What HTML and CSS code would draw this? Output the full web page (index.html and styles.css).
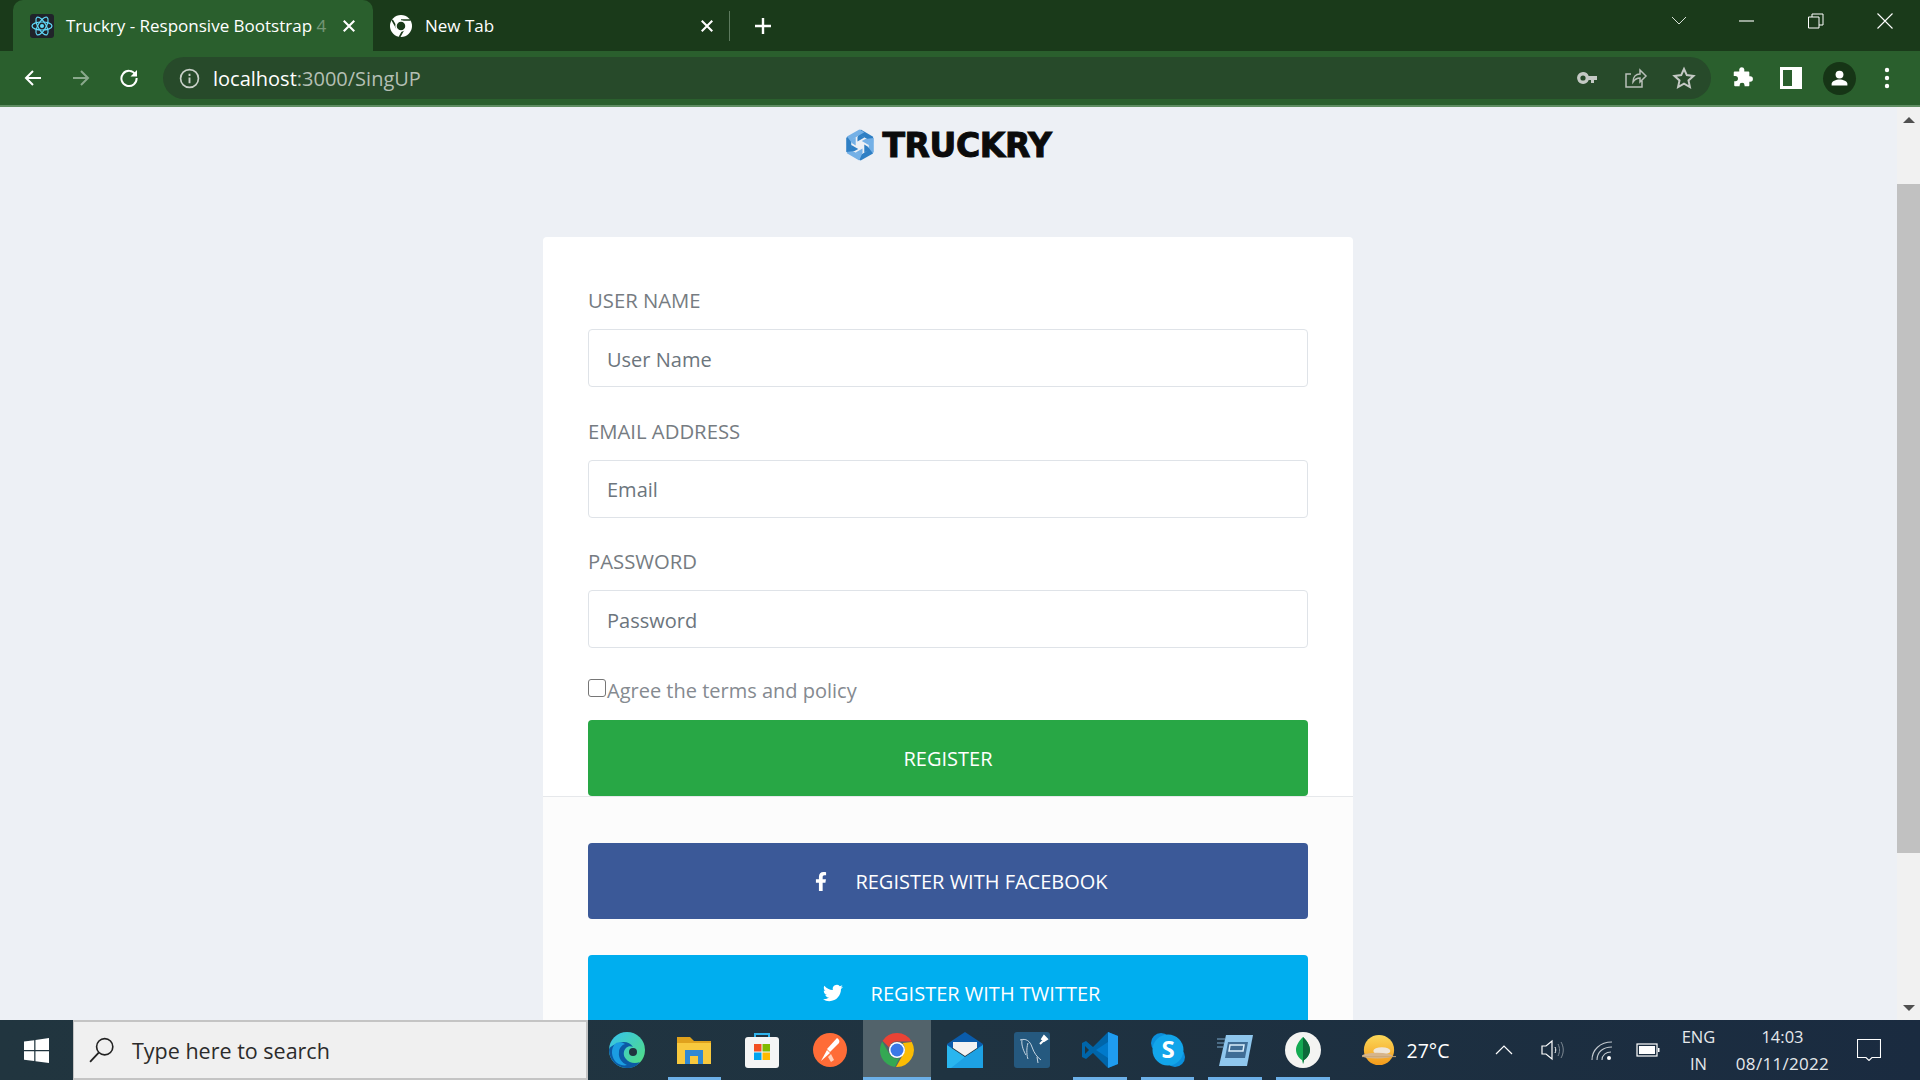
FILE: index.html
```html
<!DOCTYPE html>
<html lang="en">
<head>
  <meta charset="UTF-8" />
  <title>Truckry - Register</title>
  <link rel="stylesheet" href="styles.css">
</head>
<body>

  <!-- browser tabs -->
  <header class="tabstrip">
    <div class="tab tab-active">
      <svg class="favicon" viewBox="0 0 24 24"><rect width="24" height="24" rx="3" fill="#20232a"/><g fill="none" stroke="#61dafb" stroke-width="1.2"><ellipse cx="12" cy="12" rx="10" ry="4"/><ellipse cx="12" cy="12" rx="10" ry="4" transform="rotate(60 12 12)"/><ellipse cx="12" cy="12" rx="10" ry="4" transform="rotate(120 12 12)"/></g><circle cx="12" cy="12" r="2" fill="#61dafb"/></svg>
      <span class="tab-title">Truckry - Responsive Bootstrap <span class="tab-fade">4</span></span>
      <svg class="tab-close" viewBox="0 0 12 12"><path d="M1.5 1.5l9 9M10.5 1.5l-9 9" stroke="#fff" stroke-width="1.8"/></svg>
    </div>
    <div class="tab tab-new">
      <svg class="favicon" viewBox="0 0 24 24"><circle cx="12" cy="12" r="11" fill="#fff"/><path d="M12 6h9.5M8 14.5L3.2 6M15.5 14L10.5 23" stroke="#1a3a1a" stroke-width="1.6"/><circle cx="12" cy="12" r="5" fill="#1a3a1a" stroke="#fff" stroke-width="1.5"/></svg>
      <span class="tab-title">New Tab</span>
      <svg class="tab-close" viewBox="0 0 12 12"><path d="M1.5 1.5l9 9M10.5 1.5l-9 9" stroke="#fff" stroke-width="1.8"/></svg>
    </div>
    <div class="tab-sep"></div>
    <svg class="new-tab" viewBox="0 0 18 18"><path d="M9 1v16M1 9h16" stroke="#fff" stroke-width="2.4"/></svg>
    <div class="window-btns">
      <svg class="win-chevron" viewBox="0 0 16 10"><path d="M1 1l7 7 7-7" fill="none" stroke="#d8e2d8"/></svg>
      <svg class="win-btn" viewBox="0 0 16 16"><path d="M0 8h15" stroke="#fff" stroke-width="1.1"/></svg>
      <svg class="win-btn" viewBox="0 0 16 16"><path d="M.5 4h10.5v11H.5zM4 4V1h11v11h-4" fill="none" stroke="#fff"/></svg>
      <svg class="win-btn" viewBox="0 0 16 16"><path d="M.5.5l15 15M15.5.5l-15 15" stroke="#fff" stroke-width="1.1"/></svg>
    </div>
  </header>

  <!-- address bar row -->
  <nav class="toolbar">
    <svg class="nav-icon" viewBox="0 0 20 20"><path d="M18 10H3M10 3l-7 7 7 7" fill="none" stroke="#fff" stroke-width="2"/></svg>
    <svg class="nav-icon nav-off" viewBox="0 0 20 20"><path d="M2 10h15M10 3l7 7-7 7" fill="none" stroke="#8aa98c" stroke-width="2"/></svg>
    <svg class="nav-icon" viewBox="0 0 20 20"><path d="M16.5 6.5A7.6 7.6 0 1 0 17.6 10" fill="none" stroke="#fff" stroke-width="2"/><path d="M18 2v6.5h-6.5z" fill="#fff"/></svg>
    <div class="omnibox">
      <svg class="info-icon" viewBox="0 0 20 20"><circle cx="10" cy="10" r="8.5" fill="none" stroke="#c8d0c8" stroke-width="1.6"/><path d="M10 9v5.5M10 5.5v2" stroke="#c8d0c8" stroke-width="1.8"/></svg>
      <span class="url">localhost<span class="url-dim">:3000/SingUP</span></span>
      <div class="omni-right">
        <svg class="omni-icon" viewBox="0 0 24 24"><path fill="#c4c9c4" d="M7 6a6 6 0 1 0 5.7 8H15v3h3v-3h3v-4H12.7A6 6 0 0 0 7 6zm0 3.4a2.6 2.6 0 1 1 0 5.2 2.6 2.6 0 0 1 0-5.2z"/></svg>
        <svg class="omni-icon" viewBox="0 0 24 24"><path d="M18 14v7H2V8h5M9 16c0-5 3-8 7-8V4l6 6-6 6v-4c-3 0-5 1-7 4z" fill="none" stroke="#b9c0b9" stroke-width="1.5"/></svg>
        <svg class="omni-icon" viewBox="0 0 24 24"><path d="M12 3l2.8 6.1 6.7.8-5 4.5 1.4 6.6-5.9-3.4-5.9 3.4 1.4-6.6-5-4.5 6.7-.8z" fill="none" stroke="#c4c9c4" stroke-width="2"/></svg>
      </div>
    </div>
    <svg class="tool-icon" viewBox="0 0 24 24"><path fill="#fff" d="M9 2.500a2.800 2.800 0 0 1 5.500 0V5h4.500a1 1 0 0 1 1 1v4.200h1a2.900 2.900 0 0 1 0 5.800h-1v4a1 1 0 0 1-1 1h-4.200v-1a2.700 2.700 0 0 0-5.400 0v1H4.500a1 1 0 0 1-1-1v-4.500h1.200a2.900 2.900 0 0 0 0-5.800H3V6a1 1 0 0 1 1-1h5z"/></svg>
    <svg class="tool-icon" viewBox="0 0 22 22"><path fill="#fff" d="M0 0h22v22H0zM3 3v16h9V3z"/></svg>
    <div class="profile">
      <svg viewBox="0 0 24 24"><circle cx="12" cy="7.500" r="4.500" fill="#fff"/><path fill="#fff" d="M3 20v-2c0-3 5-5 9-5s9 2 9 5v2z"/></svg>
    </div>
    <svg class="dots" viewBox="0 0 6 22"><circle cx="3" cy="3" r="2.200" fill="#fff"/><circle cx="3" cy="11" r="2.200" fill="#fff"/><circle cx="3" cy="19" r="2.200" fill="#fff"/></svg>
  </nav>

  <div class="viewport">
    <main class="page">
      <div class="logo">
        <svg class="logo-mark" viewBox="0 0 32 36">
          <defs><path id="arm" d="M16.800 1.500L30 9.100v6.200L16.800 7.700l3.900 2.300-7.400 4.300V9.800z"/></defs>
          <use href="#arm" fill="#2f7fc4"/>
          <use href="#arm" fill="#74b0e6" transform="rotate(60 16 18)"/>
          <use href="#arm" fill="#2f7fc4" transform="rotate(120 16 18)"/>
          <use href="#arm" fill="#74b0e6" transform="rotate(180 16 18)"/>
          <use href="#arm" fill="#2f7fc4" transform="rotate(240 16 18)"/>
          <use href="#arm" fill="#74b0e6" transform="rotate(300 16 18)"/>
        </svg>
        <span class="logo-text">TRUCKRY</span>
      </div>

      <section class="card">
        <form class="card-body">
          <div class="field">
            <label for="username">USER NAME</label>
            <input id="username" type="text" placeholder="User Name">
          </div>
          <div class="field">
            <label for="email">EMAIL ADDRESS</label>
            <input id="email" type="text" placeholder="Email">
          </div>
          <div class="field">
            <label for="password">PASSWORD</label>
            <input id="password" type="text" placeholder="Password">
          </div>
          <div class="agree">
            <span class="checkbox"></span><span class="agree-text">Agree the terms and policy</span>
          </div>
          <button class="btn btn-register" type="button">REGISTER</button>
        </form>
        <div class="card-footer">
          <button class="btn btn-social btn-facebook" type="button">
            <svg class="btn-icon icon-f" viewBox="0 0 320 512"><path fill="#fff" d="M279.14 288l14.22-92.66h-88.91v-60.13c0-25.35 12.42-50.06 52.24-50.06h40.42V6.26S260.43 0 225.36 0c-73.22 0-121.08 44.38-121.08 124.72v70.62H22.89V288h81.39v224h100.17V288z"/></svg>
            REGISTER WITH FACEBOOK
          </button>
          <button class="btn btn-social btn-twitter" type="button">
            <svg class="btn-icon" viewBox="0 0 24 24"><path fill="#fff" d="M23.953 4.570a10 10 0 01-2.825.775 4.958 4.958 0 002.163-2.723c-.951.555-2.005.959-3.127 1.184a4.920 4.920 0 00-8.384 4.482C7.690 8.095 4.067 6.130 1.640 3.162a4.822 4.822 0 00-.666 2.475c0 1.710.870 3.213 2.188 4.096a4.904 4.904 0 01-2.228-.616v.060a4.923 4.923 0 003.946 4.827 4.996 4.996 0 01-2.212.085 4.936 4.936 0 004.604 3.417 9.867 9.867 0 01-6.102 2.105c-.390 0-.779-.023-1.170-.067a13.995 13.995 0 007.557 2.209c9.053 0 13.998-7.496 13.998-13.985 0-.210 0-.420-.015-.630A9.935 9.935 0 0024 4.590z"/></svg>
            REGISTER WITH TWITTER
          </button>
        </div>
      </section>
    </main>

    <aside class="scrollbar">
      <span class="arrow-up"></span>
      <div class="thumb"></div>
      <span class="arrow-down"></span>
    </aside>
  </div>

  <!-- windows taskbar -->
  <footer class="taskbar">
    <div class="start">
      <svg viewBox="0 0 24 24"><path fill="#fff" d="M0 3.400l9.800-1.300v9.400H0zM11 1.900L24 0v11.500H11zM0 12.700h9.800v9.400L0 20.800zM11 12.700h13V24l-13-1.800z"/></svg>
    </div>
    <div class="search">
      <svg class="search-icon" viewBox="0 0 24 24"><circle cx="14.500" cy="9" r="7.500" fill="none" stroke="#222" stroke-width="1.500"/><path d="M9 14.500L1 23" stroke="#222" stroke-width="1.700"/></svg>
      <span>Type here to search</span>
    </div>
    <div class="apps">
      <div class="app">
        <svg viewBox="0 0 36 36"><defs><linearGradient id="edgeA" x1="0" y1="0" x2="1" y2="1"><stop offset="0" stop-color="#35c1f1"/><stop offset="1" stop-color="#54e07a"/></linearGradient></defs><circle cx="18" cy="18" r="18" fill="url(#edgeA)"/><path fill="#0c59a4" d="M0 18C0 28 8 36 18 36c6 0 10-2 13-6-5 2-11 1-14-3-3-3-3-8 0-11 2-2 5-2 7-1-3-5-9-6-14-4C4 13 0 15 0 18z"/><path fill="#1b9de2" d="M7 11c-6 5-5 15 1 20 3 2 7 3 10 2-5-2-9-7-8-13 0-4 3-7 6-8-3-2-6-2-9-1z"/><circle cx="24" cy="20" r="4" fill="#20343f"/></svg>
      </div>
      <div class="app app-open">
        <svg viewBox="0 0 36 36"><path fill="#e0a21d" d="M1 5h13l4 4h17v5H1z"/><path fill="#f8c93e" d="M1 11h34v21H1z"/><path fill="#2f88d4" d="M9 18h18v14h-5v-8h-8v8H9z"/></svg>
      </div>
      <div class="app">
        <svg viewBox="0 0 36 36"><path d="M11 7V2h14v5" fill="none" stroke="#2fb3ec" stroke-width="2"/><rect y="5" x="1" width="34" height="31" rx="3" fill="#f4f5f5"/><path fill="#f25022" d="M10 12h7.500v7.500H10z"/><path fill="#7fba00" d="M18.500 12H26v7.500h-7.500z"/><path fill="#00a4ef" d="M10 20.500h7.500V28H10z"/><path fill="#ffb900" d="M18.500 20.500H26V28h-7.500z"/></svg>
      </div>
      <div class="app">
        <svg viewBox="0 0 36 36"><circle cx="18" cy="18" r="17" fill="#ff6c37"/><path d="M25 6c2 1 3 3 2 5l-9 9-3-3z" fill="#fff"/><path d="M15 18l3 3-9 8z" fill="#fff"/><path d="M19 22l3 6-3 2-3-5z" fill="#ffd0bb"/></svg>
      </div>
      <div class="app app-active">
        <svg viewBox="0 0 36 36"><path fill="#ea4335" d="M18 1a17 17 0 0 1 14.700 8.500H18a8.500 8.500 0 0 0-8 5.700L3.600 8.700A17 17 0 0 1 18 1z"/><path fill="#34a853" d="M3.200 9.500l7.400 12.800A8.500 8.500 0 0 0 20.500 26l-4.500 8.900A17 17 0 0 1 3.200 9.500z"/><path fill="#fbbc04" d="M32.800 10A17 17 0 0 1 17 35l7.300-13A8.500 8.500 0 0 0 23.500 11z"/><circle cx="18" cy="18" r="8" fill="#fff"/><circle cx="18" cy="18" r="6.500" fill="#3b78e7"/></svg>
      </div>
      <div class="app">
        <svg viewBox="0 0 36 36"><path fill="#0a5cab" d="M0 12L18 0l18 12v4H0z"/><path fill="#f2f2f2" d="M6 10h24v6L18 24 6 16z"/><path fill="#29b6ef" d="M0 13l18 12 18-12v23H0z"/><path fill="#1693dc" d="M36 36H4l14-11 18-12z" opacity=".6"/></svg>
      </div>
      <div class="app">
        <svg viewBox="0 0 36 36"><rect width="36" height="36" rx="3" fill="#25597f"/><path d="M6 8c6-2 10 1 12 7s5 10 9 13M8 8c-1 5 2 12 4 15M14 11c-2 6-1 14 0 16M23 25l1 6" fill="none" stroke="#c7d6e2" stroke-width="1"/><path d="M26 12l5-5M30 4l3 3-3 2-2-2z" stroke="#fff" stroke-width="2" fill="#fff"/></svg>
      </div>
      <div class="app app-open">
        <svg viewBox="0 0 36 36"><path fill="#0065a9" d="M26 0L11 15 4 9 0 11v14l4 2 7-6 15 15 10-4V4z"/><path fill="#1f9cf0" d="M26 0l10 4v28l-10 4z"/><path fill="#007acc" d="M26 10L14 18l12 8z"/><path fill="#20343f" d="M3 14v8l4-4z"/></svg>
      </div>
      <div class="app app-open">
        <svg viewBox="0 0 36 36"><circle cx="11" cy="11" r="10" fill="#0b8fdc"/><circle cx="25" cy="25" r="10" fill="#0b8fdc"/><circle cx="18" cy="18" r="15.500" fill="#12a5ea"/><text class="skype-s" x="18" y="26" text-anchor="middle">S</text></svg>
      </div>
      <div class="app app-open">
        <svg viewBox="0 0 36 36"><path fill="#8fc7ee" d="M9 3h27l-6 31H2z"/><path fill="#3f6d95" d="M11 10h20l-3 16H8z"/><path fill="none" stroke="#d9eefc" stroke-width="1.500" d="M13 13h14l-1 6H12z"/><path d="M0 7h8M0 11h7M0 15h6" stroke="#7aa9cc"/></svg>
      </div>
      <div class="app app-open">
        <svg viewBox="0 0 36 36"><circle cx="18" cy="18" r="18" fill="#f4f4f2"/><path fill="#13aa52" d="M18 5c-5 5-7 9-7 13 0 5 4 9 6 10l1 4 1-4c2-1 6-5 6-10 0-4-2-8-7-13z"/><path fill="#0d6a3a" d="M18 5v27l1-4c2-1 6-5 6-10 0-4-2-8-7-13z"/></svg>
      </div>
    </div>
    <div class="weather">
      <svg viewBox="0 0 36 36"><defs><linearGradient id="sun" x1="0" y1="0" x2="0" y2="1"><stop offset="0" stop-color="#fbd85a"/><stop offset="1" stop-color="#f49b1b"/></linearGradient></defs><circle cx="18" cy="18" r="16" fill="url(#sun)"/><ellipse cx="21" cy="19" rx="9" ry="4" fill="#efe6d8"/><ellipse cx="16" cy="24" rx="16" ry="3" fill="#d6b58c"/><path d="M0 25h36" stroke="#c9a777"/></svg>
      <span>27°C</span>
    </div>
    <div class="tray">
      <svg class="tray-chevron" viewBox="0 0 18 10"><path d="M1 9l8-8 8 8" fill="none" stroke="#fff" stroke-width="1.200"/></svg>
      <svg class="tray-icon" viewBox="0 0 24 24"><path d="M1 8h4l6-5v18l-6-5H1z" fill="none" stroke="#fff" stroke-width="1.200"/><path d="M14 9c1 2 1 4 0 6" fill="none" stroke="#fff"/><path d="M17 6c2 4 2 8 0 12M20 4c3 5 3 11 0 16" fill="none" stroke="#7d8893"/></svg>
      <svg class="tray-icon tray-wifi" viewBox="0 0 24 24"><path d="M2 22C2 12 10 4 22 4M7 22c0-8 6-13 15-13M12 22c0-5 4-8 9-8" fill="none" stroke="#c5cbd1" stroke-width="1.100"/><circle cx="19" cy="20" r="2" fill="#fff"/></svg>
      <svg class="tray-icon" viewBox="0 0 24 24"><rect x="1" y="6" width="20" height="12" fill="none" stroke="#fff" stroke-width="1.200"/><rect x="3" y="8" width="16" height="8" fill="#fff"/><path d="M22 10h1.500v4H22z" fill="#fff"/></svg>
    </div>
    <div class="lang"><span>ENG</span><span>IN</span></div>
    <div class="clock"><span>14:03</span><span class="date">08/11/2022</span></div>
    <svg class="notify" viewBox="0 0 24 22"><path d="M.5.500h23v18H15l-3 3-3-3H.5z" fill="none" stroke="#fff" stroke-width="1.100"/></svg>
  </footer>

</body>
</html>
```

FILE: styles.css
```css
* {
  box-sizing: border-box;
}

html, body {
  height: 100%;
}

body {
  margin: 0;
  height: 1080px;
  display: flex;
  flex-direction: column;
  overflow: hidden;
  font-family: "Open Sans", sans-serif;
  background: #edf0f5;
}

/* Tabs */
.tabstrip {
  height: 51px;
  flex: none;
  display: flex;
  align-items: center;
  padding-left: 13px;
  background: #1a3a1a;
  color: #fff;
}

.tab {
  width: 360px;
  height: 51px;
  display: flex;
  align-items: center;
  padding: 0 17px 0 17px;
  border-radius: 10px 10px 0 0;
}

.tab-active {
  background: #2a5f2d;
}

.tab-new {
  width: 357px;
  padding: 0 16px;
}

.favicon {
  width: 24px;
  height: 24px;
  flex: none;
  margin-right: 12px;
}

.tab-title {
  flex: 1;
  white-space: nowrap;
  font-size: 17px;
}

.tab-fade {
  opacity: 0.35;
}

.tab-close {
  width: 14px;
  height: 14px;
  flex: none;
}

.tab-sep {
  width: 1px;
  height: 30px;
  background: #5d7a5e;
  margin-left: -1px;
}

.new-tab {
  width: 18px;
  height: 18px;
  margin-left: 24px;
}

.window-btns {
  margin-left: auto;
  display: flex;
  align-items: center;
  align-self: flex-start;
  height: 42px;
  padding-right: 27px;
}

.win-chevron {
  width: 16px;
  height: 10px;
  margin-right: 52px;
}

.win-btn {
  width: 16px;
  height: 16px;
  margin-left: 53px;
}

.win-chevron + .win-btn {
  margin-left: 0;
}

/* Address bar row */
.toolbar {
  height: 56px;
  flex: none;
  display: flex;
  align-items: center;
  padding: 0 0 0 23px;
  background: #2a5f2d;
  border-bottom: 2px solid #5f8d62;
}

.nav-icon {
  width: 20px;
  height: 20px;
  margin-right: 28px;
}

.omnibox {
  width: 1548px;
  height: 42px;
  margin-left: -4px;
  display: flex;
  align-items: center;
  padding: 0 15px 0 16px;
  border-radius: 21px;
  background: #274a2a;
}

.info-icon {
  width: 21px;
  height: 21px;
  margin-right: 13px;
}

.url {
  font-size: 20px;
  color: #fff;
}

.url-dim {
  color: #b4bfb4;
}

.omni-right {
  margin-left: auto;
  display: flex;
  gap: 24px;
}

.omni-icon {
  width: 24px;
  height: 24px;
}

.tool-icon {
  width: 22px;
  height: 22px;
  margin-left: 27px;
}

.omnibox + .tool-icon {
  margin-left: 20px;
}

.profile {
  width: 33px;
  height: 33px;
  margin-left: 21px;
  padding: 6px;
  border-radius: 50%;
  background: #163516;
}

.profile svg {
  display: block;
}

.dots {
  width: 6px;
  height: 22px;
  margin-left: 28px;
}

/* Page */
.viewport {
  height: 913px;
  flex: none;
  display: flex;
  overflow: hidden;
}

.page {
  flex: 1;
  overflow: hidden;
  background: #edf0f5;
}

.logo {
  height: 130px;
  padding-top: 19px;
  display: flex;
  justify-content: center;
  align-items: flex-start;
  gap: 7px;
}

.logo-mark {
  width: 30px;
  height: 34px;
  margin-top: 2px;
}

.logo-text {
  font-family: "DejaVu Sans", sans-serif;
  font-weight: 700;
  font-size: 33px;
  line-height: 40px;
  color: #0b0b0b;
  letter-spacing: -0.4px;
  -webkit-text-stroke: 1px #0b0b0b;
}

.card {
  width: 810px;
  margin-left: 543px;
  background: #fff;
  border-radius: 4px 4px 0 0;
}

.card-body {
  padding: 49px 45px 0;
  border-bottom: 1px solid #e6e8eb;
}

.field {
  margin-bottom: 29.5px;
}

.field label {
  display: block;
  font-size: 20.3px;
  line-height: 28px;
  margin-bottom: 15px;
  color: #767c82;
}

.field input {
  display: block;
  width: 100%;
  height: 58px;
  padding: 2px 18px 0;
  border: 1px solid #dfe3e8;
  border-radius: 4px;
  font: inherit;
  font-size: 20px;
  color: #495057;
}

.field input::placeholder {
  color: #6c757d;
  opacity: 1;
}

.agree {
  display: flex;
  align-items: center;
  height: 30px;
  margin-top: -3px;
  margin-bottom: 15.5px;
  font-size: 20px;
  color: #858a90;
}

.agree-text {
  padding-top: 2px;
}

.checkbox {
  width: 18px;
  height: 18px;
  margin-top: -4px;
  margin-right: 1px;
  border: 1px solid #767676;
  border-radius: 3px;
  background: #fff;
}

.btn {
  display: flex;
  justify-content: center;
  align-items: center;
  gap: 28px;
  width: 100%;
  height: 76px;
  border: none;
  border-radius: 4px;
  font: inherit;
  font-size: 20px;
  color: #fff;
}

.btn-register {
  background: #28a745;
}

.btn-social {
  padding-left: 33px;
}

.card-footer {
  padding: 46px 45px 0;
  background: #fcfcfc;
  height: 300px;
}

.btn-facebook {
  background: #3b5998;
  margin-bottom: 36px;
}

.btn-twitter {
  background: #00aeef;
}

.btn-icon {
  width: 20px;
  height: 20px;
  fill: #fff;
}

.icon-f {
  width: 12px;
  height: 19px;
}

/* Scrollbar */
.scrollbar {
  width: 23px;
  flex: none;
  display: flex;
  flex-direction: column;
  align-items: center;
  background: #f1f1f1;
}

.arrow-up,
.arrow-down {
  flex: none;
  width: 0;
  height: 0;
  border-left: 6px solid transparent;
  border-right: 6px solid transparent;
}

.arrow-up {
  margin-top: 10px;
  border-bottom: 6px solid #505050;
}

.arrow-down {
  margin-top: 152px;
  border-top: 6px solid #505050;
}

.thumb {
  flex: none;
  width: 100%;
  height: 669px;
  margin-top: 61px;
  background: #c1c1c1;
}

/* Taskbar */
.taskbar {
  height: 60px;
  flex: none;
  display: flex;
  align-items: center;
  background: linear-gradient(90deg, #21353f 0%, #1f3341 50%, #1a2b40 100%);
  color: #fff;
}

.start {
  width: 73px;
  height: 100%;
  display: flex;
  align-items: center;
  justify-content: center;
}

.start svg {
  width: 25px;
  height: 25px;
}

.search {
  width: 515px;
  height: 100%;
  display: flex;
  align-items: center;
  gap: 17px;
  padding-left: 15px;
  border: 2px solid #c4c4c4;
  border-left: 1px solid #c4c4c4;
  background: #f0f0f0;
  font-size: 21.5px;
  color: #2b2b2b;
}

.search-icon {
  width: 26px;
  height: 26px;
}

.apps {
  display: flex;
  height: 100%;
  margin-left: 5px;
}

.app {
  position: relative;
  width: 67.6px;
  height: 100%;
  display: flex;
  align-items: center;
  justify-content: center;
}

.app svg {
  width: 36px;
  height: 36px;
}

.app-open::after,
.app-active::after {
  content: "";
  position: absolute;
  left: 7px;
  right: 7px;
  bottom: 0;
  height: 3px;
  background: #6cb0e8;
}

.app-active {
  background: #52636b;
}

.app-active::after {
  left: 0;
  right: 0;
}

.skype-s {
  font-family: "Open Sans", sans-serif;
  font-weight: 700;
  font-size: 24px;
  fill: #fff;
}

.weather {
  display: flex;
  align-items: center;
  gap: 11px;
  margin-left: 25px;
  font-size: 19.500px;
}

.weather svg {
  width: 34px;
  height: 34px;
}

.tray {
  display: flex;
  align-items: center;
  margin-left: 46px;
}

.tray-chevron {
  width: 18px;
  height: 10px;
  margin-right: 28px;
}

.tray-icon {
  width: 24px;
  height: 24px;
  margin-right: 25px;
}

.tray-wifi {
  margin-right: 22px;
}

.lang,
.clock {
  height: 100%;
  display: flex;
  flex-direction: column;
  align-items: center;
  justify-content: center;
  font-size: 16.500px;
  line-height: 27px;
  color: #e6e9ec;
}

.lang {
  margin-left: -5px;
  width: 36px;
}

.clock {
  margin-left: 19px;
  width: 94px;
}

.date {
  font-size: 17px;
  letter-spacing: 0.3px;
}

.notify {
  width: 24px;
  height: 22px;
  margin-left: 28px;
}
```
